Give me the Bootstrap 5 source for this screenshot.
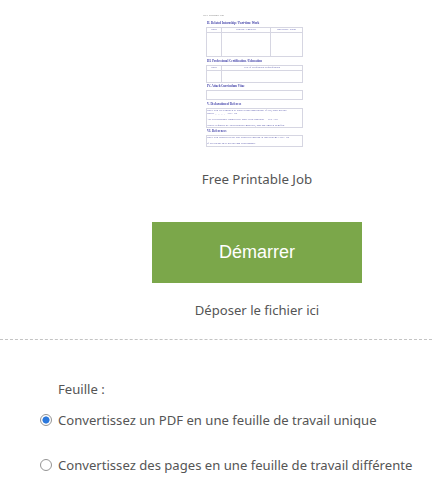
<!DOCTYPE html>
<html lang="fr">
<head>
<meta charset="utf-8">
<title>Démarrer</title>
<link rel="stylesheet" href="https://cdn.jsdelivr.net/npm/bootstrap@5.3.0/dist/css/bootstrap.min.css">
<style>
html,body{height:481px;overflow:hidden;background:#fff}
body{font-family:"Noto Sans","Open Sans",sans-serif;color:#555;font-size:13.1px}
.thumb-zone{padding-top:12px;height:170px}
.doc{width:100px;height:140px;margin-left:203px;font-family:"Liberation Serif",serif;font-size:2.9px;line-height:3.4px;color:#5a5ab0;overflow:hidden;filter:blur(.3px)}
.doc-top{color:#777;height:9px;width:26px;white-space:nowrap;font-size:2.9px;line-height:6px}
.doc-h{font-weight:700;font-size:3.1px;height:6px;line-height:5px;padding-left:4px;white-space:nowrap;color:#4444aa}
.doc-box{width:97px;margin-left:3px;border:1px solid #d6d6e2;color:#5555aa;overflow:hidden;white-space:nowrap}
.doc-row{height:5px;border-bottom:1px solid #d6d6e2;text-align:center;font-size:2.5px;line-height:4px;flex:none}
.doc-cell{border-right:1px solid #d6d6e2;flex:none;white-space:nowrap}
.c1{width:15px}.c2{width:49px}.c3{flex:1;border-right:0}
.h1t{height:30px;margin-bottom:2px}.h2t{height:18px;margin-bottom:1px}.h3t{height:10px;margin-bottom:2px}.h4t{height:20px;margin-bottom:1px}.h5t{height:12px}
.ln-gap{margin-top:2.5px}
.stage{padding-left:82px}
.title-txt{font-size:13.3px;line-height:18px;color:#555}
.btn-gap{margin-top:34px}
.go-btn{width:210px;height:61px;background:#7ba74a;color:#fff;border:0;border-radius:0;font-family:"Liberation Sans",Arial,sans-serif;font-size:18px;display:flex;align-items:center;justify-content:center;padding:0}
.go-btn:hover{background:#7ba74a;color:#fff}
.drop-txt{line-height:18px;margin-top:18px}
.dash{border-top:1px dashed #c4c4c4;margin-top:20px}
.opts{padding-left:40px;padding-top:40px}
.lab{padding-left:18px;line-height:18px;margin-bottom:13px}
.opt-row{display:flex;align-items:center;gap:6px;line-height:18px;margin-bottom:27px;white-space:nowrap}
.opt-row input{appearance:none;-webkit-appearance:none;width:12px;height:12px;margin:0;flex:none;border:1px solid #949494;border-radius:50%;background:#fff}
.opt-row input:checked{background:radial-gradient(circle,#2b78dc 0 3.2px,#fff 3.9px)}
</style>
</head>
<body>
<div class="thumb-zone">
  <div class="doc">
    <div class="doc-top">Free Printable Job</div>
    <div class="doc-h">II. Related Internship / Part-time Work</div>
    <div class="doc-box h1t d-flex flex-column">
      <div class="doc-row d-flex"><div class="doc-cell c1">Dates</div><div class="doc-cell c2">Position / Employer</div><div class="doc-cell c3">Supervisor / Phone</div></div>
      <div class="d-flex flex-grow-1"><div class="doc-cell c1"></div><div class="doc-cell c2"></div><div class="doc-cell c3"></div></div>
    </div>
    <div class="doc-h">III. Professional Certification / Education</div>
    <div class="doc-box h2t d-flex flex-column">
      <div class="doc-row d-flex"><div class="doc-cell c1">Dates</div><div class="doc-cell c3">Title of certification or qualification</div></div>
      <div class="d-flex flex-grow-1"><div class="doc-cell c1"></div><div class="doc-cell c3"></div></div>
    </div>
    <div class="doc-h">IV. Attach Curriculum Vitae</div>
    <div class="doc-box h3t"></div>
    <div class="doc-h">V. Declaration of Referees</div>
    <div class="doc-box h4t">Have you ever applied to work at this institution? If yes, state details<br>Dates: ________ Yes / No<div class="ln-gap">Are you currently employed? State your position. &nbsp; &nbsp; Yes / No</div><div class="ln-gap">Notice required by your present employer, and any agreed benefits.</div></div>
    <div class="doc-h">VI. References</div>
    <div class="doc-box h5t">Have you worked or are you related to anyone at this college? Yes / No<div class="ln-gap">If yes please give details and relationship.</div></div>
  </div>
</div>
<div class="stage">
  <div class="text-center title-txt">Free Printable Job</div>
  <div class="d-flex justify-content-center btn-gap">
    <button type="button" class="btn go-btn">Démarrer</button>
  </div>
  <div class="text-center drop-txt">Déposer le fichier ici</div>
</div>
<div class="dash"></div>
<div class="opts">
  <div class="lab">Feuille :</div>
  <label class="opt-row"><input type="radio" name="feuille" checked>Convertissez un PDF en une feuille de travail unique</label>
  <label class="opt-row mb-0"><input type="radio" name="feuille">Convertissez des pages en une feuille de travail différente</label>
</div>
<script src="https://cdn.jsdelivr.net/npm/bootstrap@5.3.0/dist/js/bootstrap.bundle.min.js"></script>
</body>
</html>
